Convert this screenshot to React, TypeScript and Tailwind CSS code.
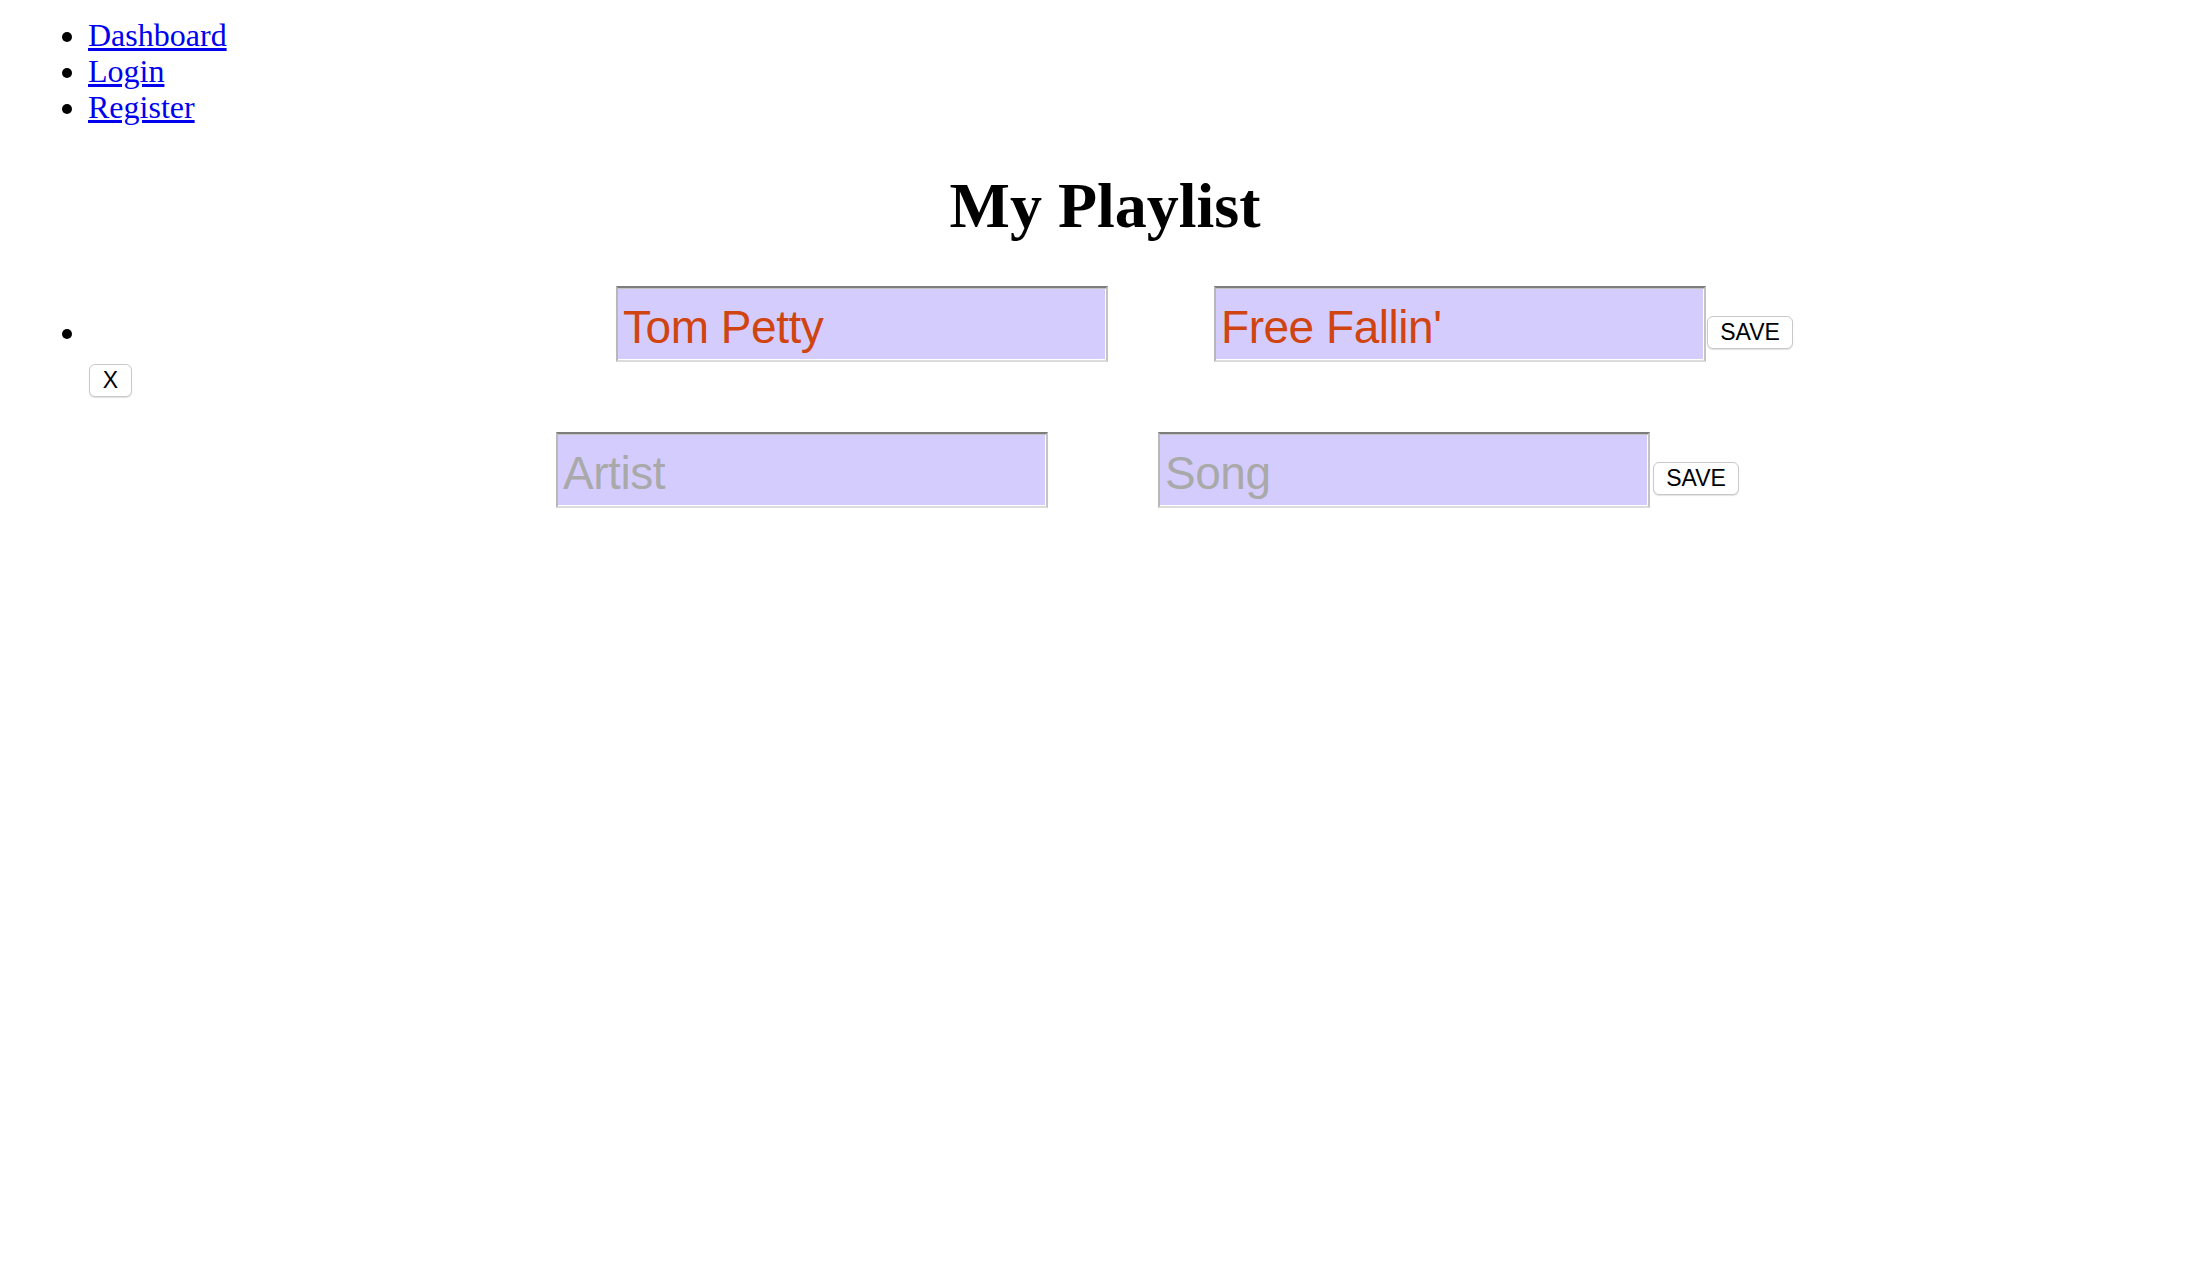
import { useState } from "react";

type Track = { id: number; artist: string; song: string };

const inputClass =
  "w-[492px] h-[76px] border-2 border-t-[#7d7d7d] border-l-[#b8b8b8] border-r-[#c4c4c4] border-b-[#dcdcdc] shadow-[inset_0_1px_0_#c2c2c2,inset_0_-1px_0_#ffffff,inset_-1px_0_0_#ffffff] bg-[#d5ccfe] px-[5px] pt-[5px] pb-0 text-[46px] tracking-[-0.01em] text-[#cf4410] placeholder:text-[#a9a9a9] outline-none font-['Liberation_Sans',Arial,sans-serif]";

const buttonClass =
  "h-[33px] bg-white border border-[#c9c9c9] rounded-[6px] shadow-[0_1px_1px_rgba(0,0,0,0.12)] text-[23px] leading-none text-black font-['Liberation_Sans',Arial,sans-serif]";

export default function App() {
  const [tracks, setTracks] = useState<Track[]>([
    { id: 1, artist: "Tom Petty", song: "Free Fallin'" },
  ]);
  const [draft, setDraft] = useState({ artist: "", song: "" });

  const updateTrack = (id: number, key: "artist" | "song", value: string) => {
    setTracks(tracks.map((t) => (t.id === id ? { ...t, [key]: value } : t)));
  };

  const addTrack = () => {
    if (!draft.artist && !draft.song) return;
    setTracks([...tracks, { id: Date.now(), ...draft }]);
    setDraft({ artist: "", song: "" });
  };

  return (
    <div className="min-h-screen bg-white text-black font-['Liberation_Serif','Times_New_Roman',serif] pt-[17px]">
      <ul className="list-disc pl-[88px] text-[32px] leading-[36px]">
        <li>
          <a href="#" className="text-[#0000ee] underline">
            Dashboard
          </a>
        </li>
        <li>
          <a href="#" className="text-[#0000ee] underline">
            Login
          </a>
        </li>
        <li>
          <a href="#" className="text-[#0000ee] underline">
            Register
          </a>
        </li>
      </ul>

      <h1 className="mt-[44px] mb-[43px] text-center text-[64px] leading-[74px] font-bold">
        My Playlist
      </h1>

      <ul className="list-disc pl-[88px] text-[32px] leading-[36px]">
        {tracks.map((t) => (
          <li key={t.id}>
            <div className="flex items-baseline pl-[528px]">
              <input
                className={inputClass}
                value={t.artist}
                onChange={(e) => updateTrack(t.id, "artist", e.target.value)}
              />
              <input
                className={inputClass + " ml-[106px]"}
                value={t.song}
                onChange={(e) => updateTrack(t.id, "song", e.target.value)}
              />
              <button className={buttonClass + " w-[86px] ml-[1px] self-end mb-[13px]"}>
                SAVE
              </button>
            </div>
            <div className="mt-[2px] flex">
              <button
                className={buttonClass + " w-[43px] ml-[1px]"}
                onClick={() => setTracks(tracks.filter((x) => x.id !== t.id))}
              >
                X
              </button>
            </div>
          </li>
        ))}
      </ul>

      <div className="mt-[35px] flex items-end pl-[556px]">
        <input
          className={inputClass}
          placeholder="Artist"
          value={draft.artist}
          onChange={(e) => setDraft({ ...draft, artist: e.target.value })}
        />
        <input
          className={inputClass + " ml-[110px]"}
          placeholder="Song"
          value={draft.song}
          onChange={(e) => setDraft({ ...draft, song: e.target.value })}
        />
        <button
          className={buttonClass + " w-[86px] ml-[3px] mb-[13px]"}
          onClick={addTrack}
        >
          SAVE
        </button>
      </div>
    </div>
  );
}
